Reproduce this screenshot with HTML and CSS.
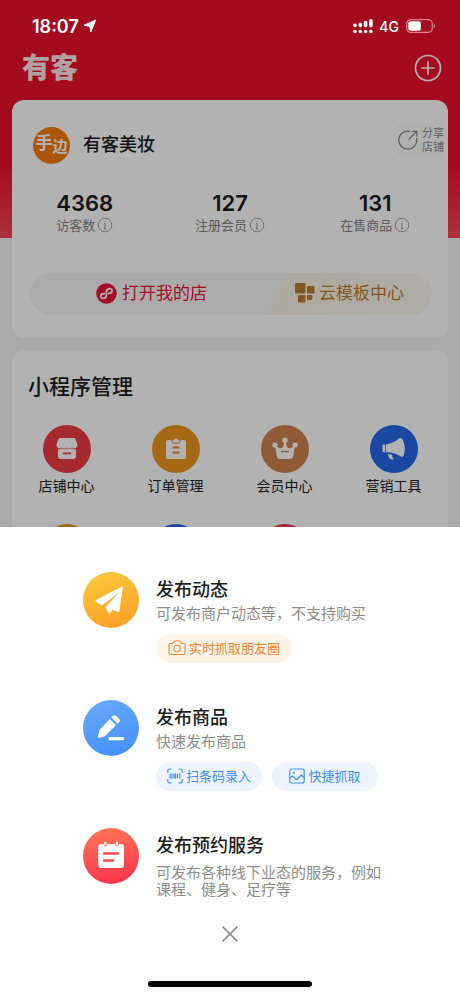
FILE: index.html
```html
<!DOCTYPE html>
<html lang="zh-CN">
<head>
<meta charset="utf-8">
<meta name="viewport" content="width=device-width, initial-scale=1">
<title>有客</title>
<link rel="stylesheet" href="styles.css">
</head>
<body>
<div class="status">
  <span class="status-time">18:07</span>
  <svg class="status-arrow" width="14" height="14" viewBox="0 0 14 14"><path d="M12.800 1 L1 6.300 L6.800 7.400 L7.800 13 Z" fill="#fff" stroke="#fff" stroke-linejoin="round"/></svg>
  <svg class="status-signal" width="20" height="16" viewBox="0 0 20 16" fill="none" stroke="#fff" stroke-width="3.6" stroke-linecap="round"><path d="M2 13.5h.01M7.3 13.5h.01M12.6 13.5h.01M17.9 13.5h.01M2 7.4v.2M7.3 6.4v1.2M12.6 4.6v3M17.9 2.8v4.8"/></svg>
  <span class="status-net">4G</span>
  <svg width="30" height="14" viewBox="0 0 30 14"><rect x=".7" y=".7" width="25.6" height="12.6" rx="4" fill="none" stroke="#d98790" stroke-width="1.2"/><rect x="2.3" y="2.3" width="12.6" height="9.4" rx="2" fill="#fff"/><path d="M27.8 4.8c1.8.7 1.8 3.7 0 4.4z" fill="#d98790"/></svg>
</div>
<main class="page">
  <header class="topbar">
    <h1 class="brand">有客</h1>
    <button class="icon-button" aria-label="添加"><svg width="28" height="28" viewBox="0 0 28 28" fill="none" stroke="#fff" stroke-width="1.7" stroke-linecap="round"><circle cx="14" cy="14" r="12.5"/><path d="M14 8v12M8 14h12"/></svg></button>
  </header>
  <section class="card shop">
    <div class="shop-head">
      <span class="avatar"><span class="avatar-a">手</span><span class="avatar-b">边</span></span>
      <h2 class="shop-name">有客美妆</h2>
      <button class="share"><svg width="20" height="20" viewBox="0 0 20 20" fill="none" stroke="#8b8b8b" stroke-width="1.3" stroke-linecap="round"><path d="M11.5 1.3A9 9 0 1 0 18.6 8.5M10.8 9.4 18.6 1.6M14.2 1.3h4.7v4.6"/></svg><span>分享<br>店铺</span></button>
    </div>
    <div class="stats">
      <div><strong class="num">4368</strong><span class="stat-label">访客数<svg class="info" viewBox="0 0 16 16"><circle cx="8" cy="8" r="6.8"/><path d="M8 4v1M8 6.500v5.500M7 6.700h1M6.800 11.900h2.400"/></svg></span></div>
      <div><strong class="num">127</strong><span class="stat-label">注册会员<svg class="info" viewBox="0 0 16 16"><circle cx="8" cy="8" r="6.8"/><path d="M8 4v1M8 6.500v5.500M7 6.700h1M6.800 11.900h2.400"/></svg></span></div>
      <div><strong class="num">131</strong><span class="stat-label">在售商品<svg class="info" viewBox="0 0 16 16"><circle cx="8" cy="8" r="6.8"/><path d="M8 4v1M8 6.500v5.500M7 6.700h1M6.800 11.900h2.400"/></svg></span></div>
    </div>
    <div class="shop-actions">
      <button class="open"><svg width="21" height="21" viewBox="0 0 21 21"><circle cx="10.5" cy="10.5" r="10.3" fill="#ec1436"/><path d="M8.3 10.6C3.2 10.9 4 15.7 7.3 15.4c2-.2 3.1-1.6 3.1-3.2V8.8c0-1.6 1.1-3 3.1-3.2 3.3-.3 4.1 4.5-1 4.8" fill="none" stroke="#fff" stroke-width="1.7" stroke-linecap="round"/></svg>打开我的店</button>
      <button class="templates"><svg width="20" height="20" viewBox="0 0 20 20" fill="#bd7f31"><rect x="0" y="0" width="10.5" height="10.5" rx="1.4"/><rect x="12" y="3" width="7.5" height="7.5" rx="1.2"/><rect x="3" y="12" width="7.5" height="7.5" rx="1.2"/><path d="M13 12h3.500q1 0 1 1v1.300q0 3-3 3H13q-1 0-1-1V13q0-1 1-1z"/></svg>云模板中心</button>
    </div>
  </section>
  <section class="card manage">
    <h2 class="manage-title">小程序管理</h2>
    <div class="grid">
      <a class="tile" href="#"><span class="disc red"><svg width="24" height="24" viewBox="0 0 24 24" fill="#fff"><path d="M5 1h14q1 0 1.500 1l2 5.500a3.200 3.200 0 0 1-5.300 3 3.500 3.500 0 0 1-5.200 0 3.500 3.500 0 0 1-5.200 0 3.200 3.200 0 0 1-5.300-3L3.500 2Q4 1 5 1z"/><path fill-rule="evenodd" d="M3 12.300q2.300.4 4-1 2.400 2 5 0 2.600 2 5 0 1.700 1.400 4 1V19q0 3-3 3H6q-3 0-3-3zM8 15.500v1.800h8v-1.800z"/></svg></span>店铺中心</a>
      <a class="tile" href="#"><span class="disc orange"><svg width="24" height="24" viewBox="0 0 24 24"><path d="M4 3h16q2 0 2 2v15q0 2-2 2H4q-2 0-2-2V5q0-2 2-2z" fill="#fff"/><path d="M8 3h1.300a2.800 2.800 0 0 1 5.400 0H16v1.500q0 1.800-1.800 1.800H9.800Q8 6.300 8 4.500z" fill="#fff" stroke="#e99118" stroke-width="1"/><path d="M8.500 10.500h7M8.500 15.500h7" stroke="#e99118" stroke-width="1.800"/></svg></span>订单管理</a>
      <a class="tile" href="#"><span class="disc bronze"><svg width="26" height="24" viewBox="0 0 26 24"><g fill="#fff"><circle cx="13" cy="3.300" r="2.700"/><circle cx="2.900" cy="8" r="2.600"/><circle cx="23.100" cy="8" r="2.600"/><path d="M3 8q4 5 7.500 2.500Q12 9 12 4h2q0 5 1.500 6.500Q19 13 23 8l-1.800 11q-.4 3-3.200 3H8q-2.800 0-3.200-3z"/></g><path d="M9 14.500h8" stroke="#ce8450" stroke-width="1.500"/></svg></span>会员中心</a>
      <a class="tile" href="#"><span class="disc blue"><svg width="24" height="24" viewBox="0 0 24 24" fill="#fff"><path d="M1.500 7.500h1.700v7.800H1.500q-1 0-1-1V8.500q0-1 1-1zM4 7.500Q12 6 17.500 1.300q2-1.200 3.600 2 3 7.500.8 14.500-1 3-3.200 1.700-5.400-4-14.700-4.200zM6 17l4.200.8.2 2.400 1.400 2.200q-3.400.8-4.800-1.800z"/></svg></span>营销工具</a>
      <span class="tile" aria-hidden="true"><span class="disc orange"></span></span>
      <span class="tile" aria-hidden="true"><span class="disc blue"></span></span>
      <span class="tile" aria-hidden="true"><span class="disc red"></span></span>
    </div>
  </section>
</main>
<div class="scrim"></div>
<div class="sheet" role="dialog" aria-label="发布">
  <div class="options">
    <article class="option">
      <span class="badge amber"><svg width="56" height="56" viewBox="0 0 56 56"><path d="M39.800 15.500 36.300 39q-.3 1.500-1.600.8l-5.400-1.800-2.400 3.300q-1 .8-1.500-.3L22.500 35.300 36.500 20 19.300 33.300l-6.500-3.600q-1-1 .4-1.700L38.500 14.800q1.300-.4 1.300.7z" fill="#fff"/></svg></span>
      <div class="body">
        <h3>发布动态</h3>
        <p>可发布商户动态等，不支持购买</p>
        <div class="pills"><button class="pill warm"><svg width="18" height="16" viewBox="0 0 18 16" fill="none" stroke="#f5832c" stroke-width="1.100" stroke-linejoin="round"><path d="M2.500 3.500h2L6.300 1h5.400l1.800 2.500h2q1.500 0 1.500 1.500v8q0 1.500-1.500 1.500h-13Q1 14.500 1 13V5q0-1.500 1.500-1.500z"/><circle cx="9" cy="8.500" r="3.200"/></svg>实时抓取朋友圈</button></div>
      </div>
    </article>
    <article class="option">
      <span class="badge azure"><svg width="56" height="56" viewBox="0 0 56 56" fill="#fff"><path d="M26.800 19 33 25.200 21.500 36.500l-5.200 1.200q-1.600.2-1.300-1.300l1.300-6.500zM28.300 17.500l1.800-1.700q1.400-1.300 2.800 0l3.500 3.500q1.200 1.300 0 2.600l-1.900 1.900z"/><rect x="25.500" y="37" width="15.500" height="3.200" rx="1"/></svg></span>
      <div class="body">
        <h3>发布商品</h3>
        <p>快速发布商品</p>
        <div class="pills">
          <button class="pill cool"><svg width="16" height="16" viewBox="0 0 16 16" fill="none" stroke="#428ef5" stroke-width="1.200"><path d="M4.500 1H3Q.8 1 .8 3v2M11.500 1H13q2.200 0 2.200 2v2M4.500 15H3Q.8 15 .8 13v-2M11.500 15H13q2.200 0 2.200-2v-2"/><path d="M3.200 5.500v5M5 5.500v5M7 5.500v5M8.500 5.500v5M10.500 5.500v5M12.800 5.500v5"/></svg>扫条码录入</button>
          <button class="pill cool"><svg width="16" height="16" viewBox="0 0 16 16" fill="none" stroke="#428ef5" stroke-width="1.200" stroke-linejoin="round"><rect x=".8" y="1" width="14.400" height="14" rx="2"/><path d="M1 9.500 3.500 8l4 3.700L12.300 7l2.700 2.500"/><circle cx="4.800" cy="4.800" r=".5" fill="#428ef5"/></svg>快捷抓取</button>
        </div>
      </div>
    </article>
    <article class="option">
      <span class="badge coral"><svg width="56" height="56" viewBox="0 0 56 56"><path d="M18.500 16h2q.2 2.300 1.800 2.300t1.800-2.300h8q.2 2.300 1.800 2.300t1.800-2.300h2q3.300 0 3.300 3.300v17.500q0 3.200-3.300 3.200H18.500q-3.300 0-3.300-3.200V19.300q0-3.300 3.300-3.300z" fill="#fff"/><path d="M22.300 14.500v1.700M33.900 14.500v1.700" stroke="#fff" stroke-width="2.200" stroke-linecap="round"/><path d="M21 25.500h14M21 32.500h9" stroke="#fb4a50" stroke-width="2.400" stroke-linecap="round"/></svg></span>
      <div class="body">
        <h3>发布预约服务</h3>
        <p class="long">可发布各种线下业态的服务，例如课程、健身、足疗等</p>
      </div>
    </article>
  </div>
  <button class="close" aria-label="关闭"><svg width="16" height="16" viewBox="0 0 16 16" fill="none" stroke="#8a8a8a" stroke-width="1.500"><path d="M.6.600 15.400 15.400M15.400.600.6 15.400"/></svg></button>
  <div class="home-indicator"></div>
</div>
</body>
</html>
```
FILE: styles.css
```css
* { box-sizing: border-box; }

body {
  margin: 0;
  position: relative;
  height: 100vh;
  overflow: hidden;
  background: #f4f4f4;
  color: #1c1c1c;
  font-family: Inter, "Noto Sans CJK SC", sans-serif;
}

h1, h2, h3, p { margin: 0; }
button {
  border: 0;
  padding: 0;
  background: none;
  color: inherit;
  font: inherit;
  display: flex;
  align-items: center;
  justify-content: center;
}
svg { display: block; flex: none; }

/* Status bar stays above the scrim */
.status {
  position: absolute;
  z-index: 2;
  top: 0;
  left: 0;
  right: 0;
  display: flex;
  align-items: center;
  height: 52px;
  padding: 0 24px 0 32px;
  color: #fff;
}
.status-time { font-size: 18px; font-weight: 600; }
.status-arrow { margin-left: 4px; }
.status-signal { margin-left: auto; }
.status-net { margin: 0 7px 0 6px; font-size: 14px; font-weight: 500; }

/* Dimmed page */
.page {
  display: flex;
  flex-direction: column;
  gap: 12px;
  padding: 50px 12px 0;
  background: linear-gradient(#ed112b 0, #ed112b 165px, #f44655 238px, transparent 238px);
}
.topbar {
  display: flex;
  align-items: center;
  justify-content: space-between;
  height: 36px;
  padding: 0 6px 0 10px;
}
.topbar + .card { margin-top: 2px; }
.brand { color: #fff; font-size: 28px; line-height: 36px; font-weight: 900; opacity: .9; }

.card { background: #fff; border-radius: 12px; }
.shop { padding: 24px 0 23px; }
.shop-head {
  display: flex;
  align-items: center;
  height: 42px;
  padding-left: 21px;
}
.avatar {
  display: flex;
  align-items: center;
  justify-content: center;
  width: 37px;
  height: 37px;
  border-radius: 50%;
  background: #f57c0c;
  color: #fff;
  font-weight: 700;
  font-size: 17px;
  line-height: 20px;
}
.avatar-a { padding-bottom: 5px; }
.avatar-b { padding-top: 4px; font-size: 15px; }
.shop-name { margin-left: 13px; font-size: 18px; line-height: 24px; font-weight: 500; }
.share {
  gap: 4px;
  margin: 0 4px 10px auto;
  padding: 4px 0 4px 6px;
  border-radius: 20px 0 0 20px;
  background: #fcfcfc;
  color: #8b8b8b;
  font-size: 11px;
  line-height: 14px;
}

.stats {
  display: grid;
  grid-template-columns: repeat(3, 1fr);
  margin-top: 24px;
  text-align: center;
}
.num { display: block; font-size: 22px; line-height: 26px; font-weight: 600; }
.stat-label {
  display: flex;
  align-items: center;
  justify-content: center;
  gap: 2px;
  color: #858585;
  font-size: 13px;
  line-height: 18px;
}
.info { width: 16px; height: 16px; fill: none; stroke: #a0a0a0; stroke-width: 1; }

.shop-actions {
  display: grid;
  grid-template-columns: 59fr 41fr;
  height: 42px;
  margin: 39px 16px 0 18px;
  border-radius: 21px;
  background: #f5f5f5;
  overflow: hidden;
  font-size: 17px;
  line-height: 24px;
}
.open { gap: 5px; padding: 0 0 2px 6px; color: #ec1436; }
.templates {
  gap: 4px;
  padding-bottom: 2px;
  color: #bd7f31;
  background: linear-gradient(90deg, #f8f3e6, #faf7f0);
  clip-path: polygon(12% 0, 100% 0, 100% 100%, 0 100%);
}

.manage { padding: 22px 0 0; }
.manage-title { padding-left: 16px; font-size: 21px; line-height: 30px; font-weight: 500; }
.grid {
  display: grid;
  grid-template-columns: repeat(4, 1fr);
  gap: 28px 0;
  margin-top: 23px;
}
.tile {
  display: flex;
  flex-direction: column;
  align-items: center;
  gap: 3px;
  color: #222;
  font-size: 14px;
  line-height: 20px;
  text-decoration: none;
}
.disc {
  display: flex;
  align-items: center;
  justify-content: center;
  width: 48px;
  height: 48px;
  border-radius: 50%;
}
.red { background: #ee3c43; }
.orange { background: #ec961c; }
.bronze { background: #ce8450; }
.blue { background: #2466e8; }

.scrim { position: absolute; inset: 0; background: rgba(0, 0, 0, .3); }

/* Bottom sheet */
.sheet {
  position: absolute;
  left: 0;
  right: 0;
  bottom: 0;
  display: flex;
  flex-direction: column;
  align-items: center;
  padding: 45px 0 9px;
  background: #fff;
}
.options {
  display: flex;
  flex-direction: column;
  gap: 37px;
  width: 100%;
  padding: 0 76px 0 83px;
}
.option { display: flex; gap: 17px; min-height: 91px; }
.badge { flex: none; width: 56px; height: 56px; border-radius: 50%; }
.amber { background: linear-gradient(160deg, #fccb3c, #fb9d26); }
.azure { background: linear-gradient(160deg, #6aabfb, #428df6); }
.coral { background: linear-gradient(170deg, #fd7859, #fc2f4a); }
.body { flex: 1; padding-top: 6px; }
.body h3 { font-size: 18px; line-height: 24px; font-weight: 500; }
.body p { color: #8d8d8d; font-size: 15px; line-height: 24px; }
.body .long { padding-top: 6px; line-height: 17px; }
.pills { display: flex; gap: 10px; margin-top: 8px; }
.pill {
  gap: 3px;
  min-width: 106px;
  height: 29px;
  padding: 0 10px;
  border-radius: 15px;
  font-size: 13px;
  line-height: 18px;
  white-space: nowrap;
}
.warm { padding: 0 12px; background: #fff4e8; color: #f5832c; }
.cool { background: #ecf4ff; color: #428ef5; }
.pill { padding-bottom: 2px; }
.close { width: 30px; height: 30px; }
.home-indicator {
  width: 164px;
  height: 6px;
  margin-top: 32px;
  border-radius: 3px;
  background: #000;
}
```
